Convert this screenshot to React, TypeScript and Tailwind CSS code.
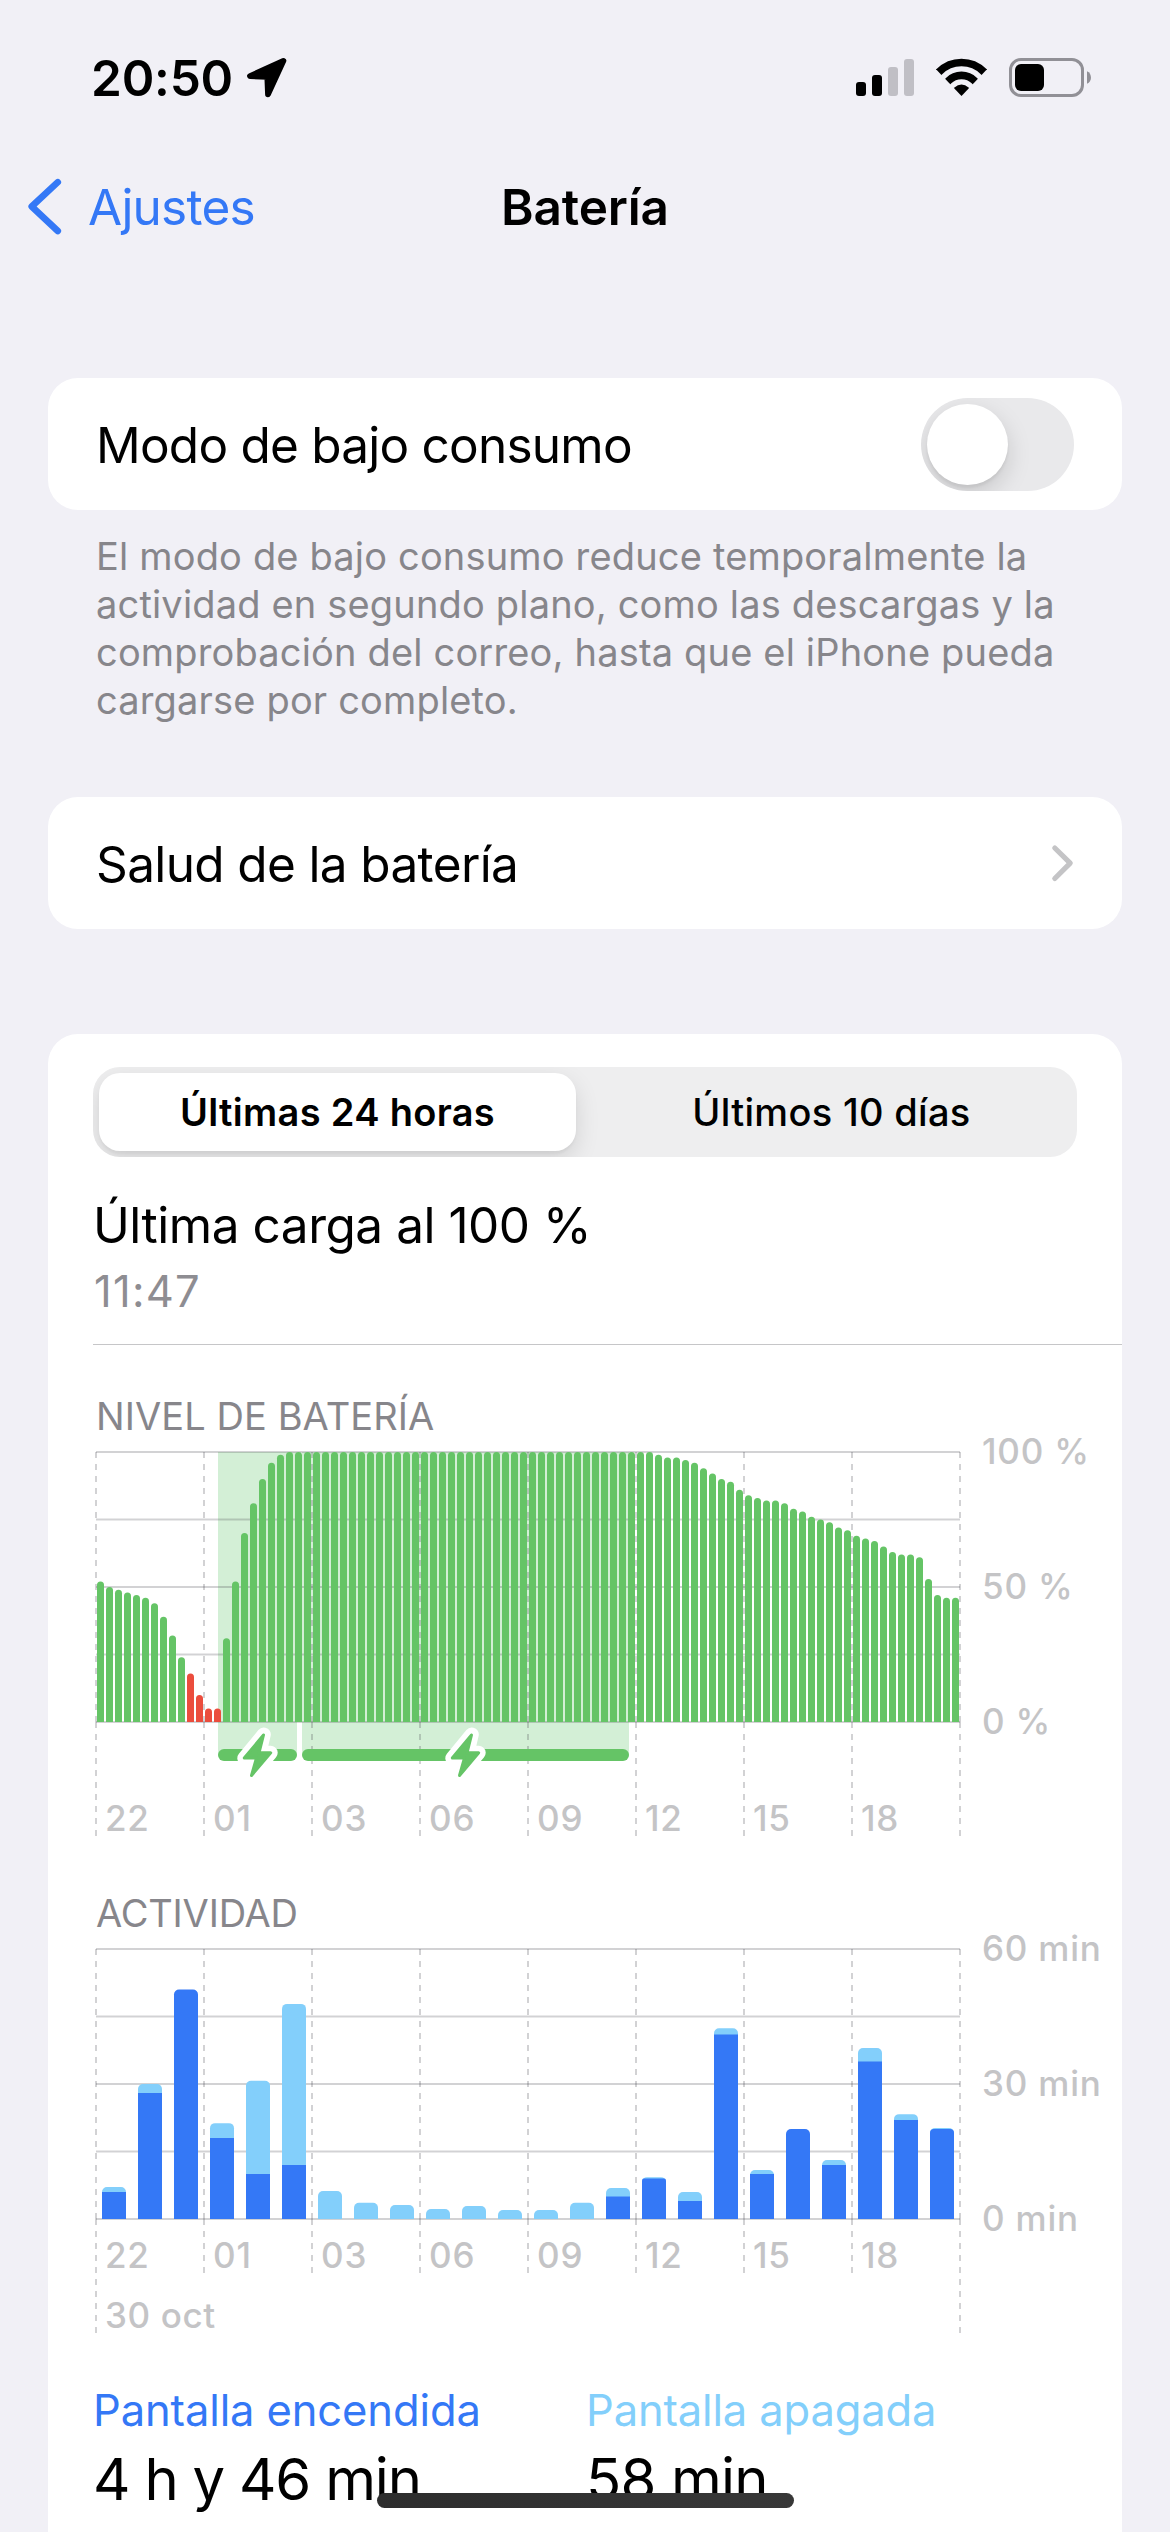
import React from "react";

const HOURS = ["22", "01", "03", "06", "09", "12", "15", "18"];

const LEVELS = [
  52, 50, 49, 48, 47, 46, 44, 39, 32, 24, 18, 10, 5, 5, 31, 52, 70, 81, 90, 96, 99,
  ...Array<number>(41).fill(100),
  99, 98, 98, 97, 96, 94, 92, 90, 89, 86, 84, 83, 82, 82, 81, 79, 78, 76, 75, 74, 72, 71, 69, 68, 67, 65,
  63, 62, 62, 61, 53, 47, 46, 46,
];

// Minutes per hour: [screen on, total]
const ACTIVITY: [number, number][] = [
  [6, 7.1], [28, 30], [51, 51], [18, 21.3], [10, 30.7], [12, 47.8],
  [0, 6.2], [0, 3.6], [0, 3.1], [0, 2.2], [0, 2.9], [0, 2],
  [0, 2], [0, 3.6], [5, 6.9], [9, 9.3], [4, 6], [41, 42.4],
  [10, 10.9], [20, 20], [12, 13.1], [35, 38], [22, 23.3], [20, 20.2],
];

const CHARGES = [
  { from: 122, to: 201 },
  { from: 206, to: 533 },
];

function topRounded(x: number, y: number, w: number, bottom: number, r: number) {
  return `M${x} ${bottom}V${y + r}a${r} ${r} 0 0 1 ${r} ${-r}h${w - 2 * r}a${r} ${r} 0 0 1 ${r} ${r}V${bottom}Z`;
}

function Grid({ inner, outer }: { inner: number; outer: number }) {
  return (
    <g stroke="#3c3c43" strokeOpacity="0.23">
      {[0, 67.5, 135, 202.5, 270].map((y) => (
        <line key={y} x1="0" x2="864" y1={y} y2={y} strokeWidth="2" />
      ))}
      {Array.from({ length: 9 }, (_, i) => (
        <path
          key={i}
          d={`M${i * 108} 0V270M${i * 108} 270V${i === 0 || i === 8 ? outer : inner}`}
          strokeWidth="2"
          strokeDasharray="6 6"
        />
      ))}
    </g>
  );
}

function AxisLabels({ rows, hoursY }: { rows: string[]; hoursY: number }) {
  return (
    <g className="fill-[#c4c4c6] text-[35px] font-medium tracking-[0.8px]">
      {rows.map((t, i) => (
        <text key={t} x="886" y={12 + i * 135}>
          {t}
        </text>
      ))}
      {HOURS.map((t, i) => (
        <text key={t} x={9 + i * 108} y={hoursY}>
          {t}
        </text>
      ))}
    </g>
  );
}

function BatteryChart() {
  return (
    <svg className="-mt-[12px] block h-[422px] w-[1074px]" viewBox="-48 -24 1074 422">
      {CHARGES.map((c) => (
        <rect key={c.from} x={c.from} y="0" width={c.to - c.from} height="303" fill="#d3efd6" />
      ))}
      <Grid inner={384} outer={384} />
      {LEVELS.map((v, i) => (
        <path
          key={i}
          d={topRounded(i * 9 + 1, 270 - v * 2.7, 7, 270, 3.5)}
          fill={v <= 20 ? "#eb4d3d" : "#65c466"}
        />
      ))}
      {CHARGES.map((c) => (
        <g key={c.from}>
          <rect x={c.from} y="297" width={c.to - c.from} height="12" rx="6" fill="#65c466" />
          <g transform={`translate(${(c.from + c.to) / 2} 303)`} strokeLinejoin="round">
            <path
              d="M6.3 -20.5L-13.2 3.2H-1.3L-6.3 21L13.2 -2.2H2Z"
              fill="#fff"
              stroke="#fff"
              strokeWidth="14"
            />
            <path
              d="M6 -20L-13.2 3H-1L-6 20.5L13.2 -2.2H1.5Z"
              fill="#65c466"
              stroke="#65c466"
              strokeWidth="3"
            />
          </g>
        </g>
      ))}
      <AxisLabels rows={["100 %", "50 %", "0 %"]} hoursY={379} />
    </svg>
  );
}

function ActivityChart() {
  return (
    <svg className="-mt-[12px] block h-[422px] w-[1074px]" viewBox="-48 -24 1074 422">
      <Grid inner={324} outer={384} />
      {ACTIVITY.map(([on, total], i) => (
        <g key={i}>
          <path
            d={topRounded(6 + i * 36, 270 - total * 4.5, 24, 270, 5)}
            fill={on === total ? "#3478f6" : "#83cffb"}
          />
          {on > 0 && on < total && (
            <path
              d={topRounded(6 + i * 36, 270 - on * 4.5, 24, 270, total - on < 0.25 ? 4 : total - on < 0.5 ? 2 : 0)}
              fill="#3478f6"
            />
          )}
        </g>
      ))}
      <AxisLabels rows={["60 min", "30 min", "0 min"]} hoursY={319} />
      <text x="9" y="379" className="fill-[#c4c4c6] text-[35px] font-medium tracking-[0.6px]">
        30 oct
      </text>
    </svg>
  );
}

function StatusBar() {
  return (
    <div className="flex h-[155px] shrink-0 items-center pr-[79px] pl-[91px]">
      <span className="text-[49.5px] leading-[60px] font-semibold tracking-[-0.2px]">20:50</span>
      <svg className="ml-[14px] h-[41px] w-[40px]" viewBox="0 0 40 41">
        <path
          d="M36.4 3.8L3 19.1L20.3 19.8L21 37.3Z"
          fill="#000"
          stroke="#000"
          strokeWidth="5.8"
          strokeLinejoin="round"
        />
      </svg>
      <div className="ml-auto flex items-center gap-[22px]">
        <svg className="h-[39px] w-[58px]" viewBox="0 0 58 39">
          <rect x="0" y="24" width="10" height="14" rx="3" />
          <rect x="16" y="17" width="10" height="21" rx="3" />
          <rect x="32" y="9" width="10" height="29" rx="3" fill="#c0bfc5" />
          <rect x="48" y="1" width="10" height="37" rx="3" fill="#c0bfc5" />
        </svg>
        <svg className="h-[39px] w-[51px]" viewBox="0 0 51 39">
          <clipPath id="wifi">
            <path d="M25.5 38.1L-10 0.7V-10H61V0.7Z" />
          </clipPath>
          <g clipPath="url(#wifi)">
            <circle cx="25.5" cy="36" r="31.5" fill="none" stroke="#000" strokeWidth="7.6" />
            <circle cx="25.5" cy="36" r="18.6" fill="none" stroke="#000" strokeWidth="7.6" />
            <circle cx="25.5" cy="36" r="9.4" />
          </g>
        </svg>
        <svg className="h-[39px] w-[82px]" viewBox="0 0 82 39">
          <rect x="1.5" y="1.5" width="72" height="36" rx="10.5" fill="none" stroke="#919096" strokeWidth="3" />
          <rect x="6" y="6" width="29" height="27" rx="6" />
          <path d="M78 13.2C83.3 15.5 83.3 23.5 78 25.8Z" fill="#919096" />
        </svg>
      </div>
    </div>
  );
}

export default function App() {
  return (
    <div className="relative flex h-[2532px] w-[1170px] flex-col overflow-hidden bg-[#f1f0f6] font-[Inter,sans-serif] text-black">
      <StatusBar />

      <div className="grid h-[104px] shrink-0 grid-cols-3 items-center">
        <div className="flex items-center text-[#3478f6]">
          <svg className="ml-[26px] h-[60px] w-[38px]" viewBox="0 0 38 60">
            <path
              d="M31.8 5.2L5.7 29.5L31.8 54"
              fill="none"
              stroke="currentColor"
              strokeWidth="6.6"
              strokeLinecap="round"
              strokeLinejoin="round"
            />
          </svg>
          <span className="ml-[24px] text-[49.5px] leading-[60px] tracking-[-0.77px]">Ajustes</span>
        </div>
        <span className="text-center text-[49.5px] leading-[60px] font-semibold tracking-[-0.15px]">Batería</span>
      </div>

      <div className="mx-[48px] mt-[119px] flex h-[132px] shrink-0 items-center justify-between rounded-[30px] bg-white px-[48px]">
        <span className="pt-[2px] text-[49.5px] leading-[60px] tracking-[-0.77px]">Modo de bajo consumo</span>
        <div className="h-[93px] w-[153px] overflow-hidden rounded-full bg-[#e9e9eb] p-[6px]">
          <div className="size-[81px] rounded-full bg-white shadow-[0_9px_24px_rgba(0,0,0,0.15),0_3px_3px_rgba(0,0,0,0.06)]" />
        </div>
      </div>
      <p className="mt-[22px] ml-[96px] shrink-0 text-[38px] leading-[48px] tracking-[0.17px] whitespace-nowrap text-[#87868b]">
        El modo de bajo consumo reduce temporalmente la
        <br />
        actividad en segundo plano, como las descargas y la
        <br />
        comprobación del correo, hasta que el iPhone pueda
        <br />
        cargarse por completo.
      </p>

      <div className="mx-[48px] mt-[73px] flex h-[132px] shrink-0 items-center justify-between rounded-[30px] bg-white px-[48px]">
        <span className="pt-[2px] text-[49.5px] leading-[60px] tracking-[-0.63px]">Salud de la batería</span>
        <svg className="h-[40px] w-[24px]" viewBox="0 0 24 40">
          <path
            d="M4.8 5L20.2 20.2L4.8 35.5"
            fill="none"
            stroke="#c4c4c6"
            strokeWidth="5.2"
            strokeLinecap="round"
            strokeLinejoin="round"
          />
        </svg>
      </div>

      <div className="mx-[48px] mt-[105px] flex flex-1 flex-col rounded-t-[30px] bg-white pt-[33px]">
        <div className="mx-[45px] flex h-[90px] shrink-0 overflow-hidden rounded-[27px] bg-[#eeeeef] p-[6px] text-[38px] leading-[48px] tracking-[0.31px]">
          <div className="flex w-[477px] items-center justify-center rounded-[21px] bg-white font-semibold shadow-[0_9px_24px_rgba(0,0,0,0.12),0_3px_3px_rgba(0,0,0,0.04)]">
            Últimas 24 horas
          </div>
          <div className="ml-[9px] flex flex-1 items-center justify-center pl-[7px] font-medium">Últimos 10 días</div>
        </div>

        <div className="mt-[38px] ml-[45px] text-[49.5px] leading-[60px] tracking-[-0.47px]">Última carga al 100 %</div>
        <div className="mt-[10px] ml-[46px] text-[43.5px] leading-[52px] tracking-[1.25px] text-[#8e8d92]">11:47</div>
        <div className="mt-[27px] ml-[45px] h-px shrink-0 bg-[#c6c6c8]" />

        <div className="mt-[47px] ml-[48px] text-[38px] leading-[48px] tracking-[0.07px] text-[#87868b]">NIVEL DE BATERÍA</div>
        <BatteryChart />
        <div className="mt-[39px] ml-[48px] text-[38px] leading-[48px] tracking-[-0.2px] text-[#87868b]">ACTIVIDAD</div>
        <ActivityChart />

        <div className="mt-[36px] ml-[45px] grid grid-cols-[493px_1fr] gap-y-[7px]">
          <span className="text-[43.5px] leading-[54px] tracking-[-0.11px] text-[#3478f6]">Pantalla encendida</span>
          <span className="text-[43.5px] leading-[54px] tracking-[-0.14px] text-[#83cffb]">Pantalla apagada</span>
          <span className="text-[58px] leading-[70px] tracking-[-1.2px]">4 h y 46 min</span>
          <span className="text-[58px] leading-[70px] tracking-[-0.8px]">58 min</span>
        </div>
      </div>

      <div className="absolute top-[2493px] left-[377px] h-[15px] w-[417px] rounded-full bg-linear-to-r from-[#2d2d2d] to-[#383838]" />
    </div>
  );
}
